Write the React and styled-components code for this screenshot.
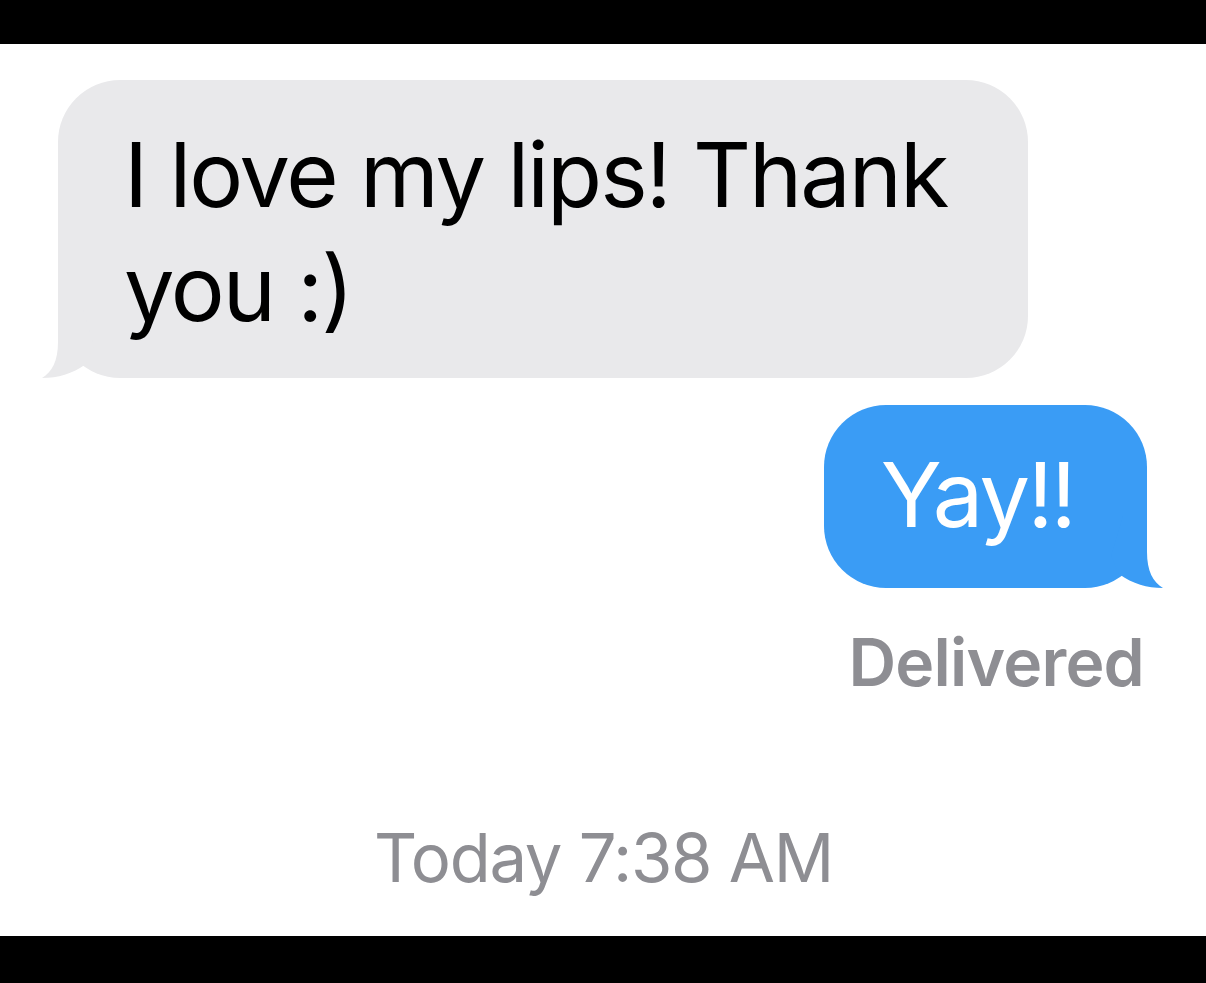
import React from "react";
import styled, { createGlobalStyle } from "styled-components";

const GlobalStyle = createGlobalStyle`
  html, body {
    margin: 0;
    padding: 0;
    background: #000;
  }
  body {
    font-family: Inter, "Noto Sans", "Liberation Sans", sans-serif;
    -webkit-font-smoothing: antialiased;
  }
`;

const Screen = styled.div`
  display: flex;
  flex-direction: column;
  width: 1206px;
  height: 983px;
  background: #000;
`;

const Bar = styled.div`
  height: ${(p) => p.h}px;
  flex-shrink: 0;
  background: #000;
`;

const Thread = styled.div`
  flex: 1;
  display: flex;
  flex-direction: column;
  background: #fff;
  padding: 36px 59px 0 58px;
`;

const Bubble = styled.div`
  position: relative;
  box-sizing: border-box;
  border-radius: 62px;
  font-size: 90px;
  line-height: 114px;
  letter-spacing: -2px;
  background: ${(p) => (p.mine ? "#3a9cf5" : "#e9e9eb")};
  color: ${(p) => (p.mine ? "#fff" : "#000")};
  align-self: ${(p) => (p.mine ? "flex-end" : "flex-start")};
`;

const TheirBubble = styled(Bubble)`
  width: 970px;
  padding: 38px 40px 32px 66px;
`;

const MyBubble = styled(Bubble)`
  margin-top: 27px;
  padding: 33px 73px 36px 57px;
  letter-spacing: -2.6px;
`;

const TailSvg = styled.svg`
  position: absolute;
  bottom: 0;
  width: 88px;
  height: 72px;
  display: block;
  ${(p) =>
    p.mine
      ? "right: -16px; transform: scaleX(-1);"
      : "left: -16px;"}
`;

const Status = styled.div`
  align-self: flex-end;
  margin-top: 34px;
  margin-right: 3px;
  font-size: 66px;
  line-height: 80px;
  font-weight: 600;
  letter-spacing: -0.8px;
  color: #8e8e93;
`;

const Stamp = styled.div`
  align-self: center;
  margin-top: 116px;
  margin-left: 2px;
  font-size: 67px;
  line-height: 80px;
  font-weight: 400;
  letter-spacing: -1.3px;
  color: #8e8e93;
`;

function Tail({ mine, color }) {
  return (
    <TailSvg mine={mine} viewBox="0 0 88 72">
      <path
        d="M16 0 L16 36 C16 55 10 66 0 72 C16 72 30 68 44 58 L52 40 L40 0 Z"
        fill={color}
      />
    </TailSvg>
  );
}

export default function App() {
  return (
    <>
      <GlobalStyle />
      <Screen>
        <Bar h={44} />
        <Thread>
          <TheirBubble>
            <Tail color="#e9e9eb" />
            I love my lips! Thank you :)
          </TheirBubble>
          <MyBubble mine>
            <Tail mine color="#3a9cf5" />
            Yay!!
          </MyBubble>
          <Status>Delivered</Status>
          <Stamp>Today 7:38 AM</Stamp>
        </Thread>
        <Bar h={47} />
      </Screen>
    </>
  );
}
